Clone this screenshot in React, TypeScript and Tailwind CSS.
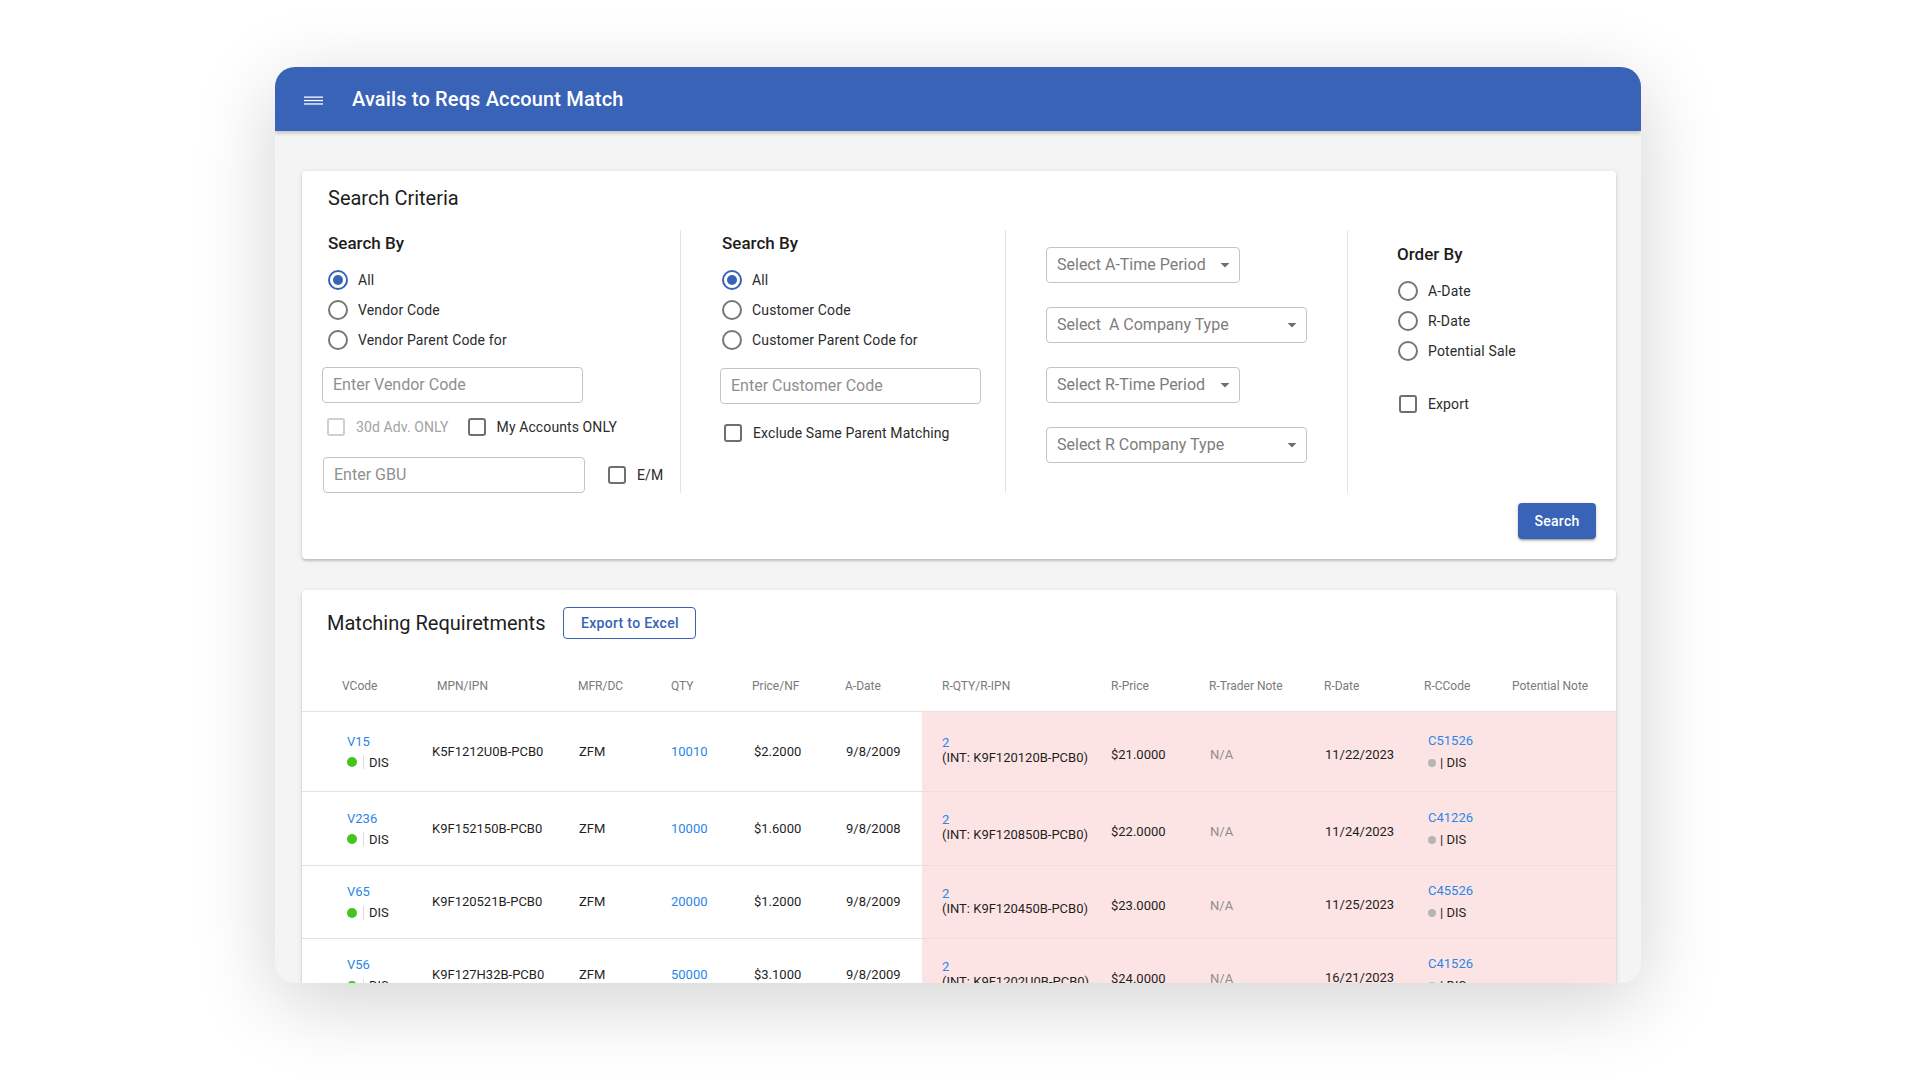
import React from "react";

function Radio({ checked, label }: { checked?: boolean; label: string }) {
  return (
    <div className="flex items-center h-[30px] gap-[10px]">
      {checked ? (
        <span className="w-[20px] h-[20px] rounded-full border-2 border-[#3963b7] flex items-center justify-center">
          <span className="w-[10px] h-[10px] rounded-full bg-[#3963b7]" />
        </span>
      ) : (
        <span className="w-[20px] h-[20px] rounded-full border-2 border-[#767676]" />
      )}
      <span className="text-[14px] tracking-[0.15px] text-[#2b2b2b] leading-[20px]">{label}</span>
    </div>
  );
}

function Check({ label, disabled }: { label: string; disabled?: boolean }) {
  return (
    <div className="flex items-center h-[20px] gap-[11px]">
      <span
        className={
          disabled
            ? "w-[18px] h-[18px] rounded-[3px] border-2 border-[#cfcfcf]"
            : "w-[18px] h-[18px] rounded-[3px] border-2 border-[#6f6f6f]"
        }
      />
      <span className={disabled ? "text-[14px] tracking-[0.1px] text-[#a3a3a3]" : "text-[14px] tracking-[0.1px] text-[#2b2b2b]"}>{label}</span>
    </div>
  );
}

function TextBox({ placeholder, w }: { placeholder: string; w: string }) {
  return (
    <div className={`${w} h-[36px] border border-[#c4c4c4] rounded-[4px] bg-white flex items-center pl-[10px]`}>
      <span className="text-[16px] text-[#8f8f8f]">{placeholder}</span>
    </div>
  );
}

function SelectBox({ label, wide }: { label: string; wide?: boolean }) {
  return (
    <div
      className={
        wide
          ? "w-[261px] h-[36px] border border-[#c4c4c4] rounded-[4px] bg-white flex items-center justify-between pl-[10px] pr-[2px]"
          : "w-[194px] h-[36px] border border-[#c4c4c4] rounded-[4px] bg-white flex items-center justify-between pl-[10px] pr-[2px]"
      }
    >
      <span className="text-[16px] text-[#7d7d7d] whitespace-pre">{label}</span>
      <svg width="24" height="24" viewBox="0 0 24 24">
        <path d="M7.5 10l4.5 4.5 4.5-4.5z" fill="#6f6f6f" />
      </svg>
    </div>
  );
}

const rows = [
  { v: "V15", mpn: "K5F1212U0B-PCB0", qty: "10010", price: "$2.2000", adate: "9/8/2009", int: "K9F120120B-PCB0", rprice: "$21.0000", rdate: "11/22/2023", cc: "C51526", h: "h-[80px]" },
  { v: "V236", mpn: "K9F152150B-PCB0", qty: "10000", price: "$1.6000", adate: "9/8/2008", int: "K9F120850B-PCB0", rprice: "$22.0000", rdate: "11/24/2023", cc: "C41226", h: "h-[74px]" },
  { v: "V65", mpn: "K9F120521B-PCB0", qty: "20000", price: "$1.2000", adate: "9/8/2009", int: "K9F120450B-PCB0", rprice: "$23.0000", rdate: "11/25/2023", cc: "C45526", h: "h-[73px]" },
  { v: "V56", mpn: "K9F127H32B-PCB0", qty: "50000", price: "$3.1000", adate: "9/8/2009", int: "K9F1202U0B-PCB0", rprice: "$24.0000", rdate: "16/21/2023", cc: "C41526", h: "h-[73px]" },
];

export default function App() {
  return (
    <div className="min-h-screen bg-white pt-[67px] pl-[275px] [font-family:Roboto,'Noto_Sans',sans-serif]">
      <div className="w-[1366px] h-[916px] rounded-[20px] overflow-hidden bg-[#f4f4f4] shadow-[0_18px_80px_rgba(0,0,0,0.18)] flex flex-col">
        {/* App bar */}
        <div className="relative z-10 h-[64px] shrink-0 bg-[#3963b7] flex items-center pl-[29px] shadow-[0_2px_4px_rgba(0,0,0,0.22)]">
          <svg width="19" height="9" viewBox="0 0 19 9" className="mt-[2px]">
            <rect x="0" y="0.5" width="19" height="1.3" fill="#ffffff" />
            <rect x="0" y="3.9" width="19" height="1.3" fill="#ffffff" />
            <rect x="0" y="7.3" width="19" height="1.3" fill="#ffffff" />
          </svg>
          <span className="ml-[29px] text-white text-[20px] tracking-[0.15px] font-medium leading-[24px]">Avails to Reqs Account Match</span>
        </div>

        {/* Content */}
        <div className="flex flex-col pl-[27px] pr-[25px] pt-[40px] gap-[31px]">
          {/* Search criteria card */}
          <div className="bg-white rounded-[4px] shadow-[0_2px_2px_rgba(0,0,0,0.14),0_1px_5px_rgba(0,0,0,0.12)] pt-[15px] pb-[20px] flex flex-col">
            <div className="pl-[26px] text-[20px] leading-[24px] text-[#1d1d1d]">Search Criteria</div>
            <div className="mt-[20px] flex h-[263px]">
              {/* Section 1 */}
              <div className="w-[379px] border-r border-[#e4e4e4] pl-[20px] flex flex-col">
                <div className="mt-[3px] ml-[6px] text-[17px] leading-[20px] font-medium text-[#1d1d1d]">Search By</div>
                <div className="mt-[12px] ml-[6px] flex flex-col">
                  <Radio checked label="All" />
                  <Radio label="Vendor Code" />
                  <Radio label="Vendor Parent Code for" />
                </div>
                <div className="mt-[12px]">
                  <TextBox placeholder="Enter Vendor Code" w="w-[261px]" />
                </div>
                <div className="mt-[14px] ml-[5px] flex items-center gap-[19px]">
                  <Check disabled label="30d Adv. ONLY" />
                  <Check label="My Accounts ONLY" />
                </div>
                <div className="mt-[20px] ml-[1px] flex items-center gap-[23px]">
                  <TextBox placeholder="Enter GBU" w="w-[262px]" />
                  <Check label="E/M" />
                </div>
              </div>
              {/* Section 2 */}
              <div className="w-[325px] border-r border-[#e4e4e4] pl-[39px] flex flex-col">
                <div className="mt-[3px] ml-[2px] text-[17px] leading-[20px] font-medium text-[#1d1d1d]">Search By</div>
                <div className="mt-[12px] ml-[2px] flex flex-col">
                  <Radio checked label="All" />
                  <Radio label="Customer Code" />
                  <Radio label="Customer Parent Code for" />
                </div>
                <div className="mt-[13px]">
                  <TextBox placeholder="Enter Customer Code" w="w-[261px]" />
                </div>
                <div className="mt-[19px] ml-[4px]">
                  <Check label="Exclude Same Parent Matching" />
                </div>
              </div>
              {/* Section 3 */}
              <div className="w-[342px] border-r border-[#e4e4e4] pl-[40px] pt-[17px] flex flex-col gap-[24px]">
                <SelectBox label="Select A-Time Period" />
                <SelectBox wide label="Select  A Company Type" />
                <SelectBox label="Select R-Time Period" />
                <SelectBox wide label="Select R Company Type" />
              </div>
              {/* Section 4 */}
              <div className="flex-1 pl-[49px] flex flex-col">
                <div className="mt-[14px] text-[17px] leading-[20px] font-medium text-[#1d1d1d]">Order By</div>
                <div className="mt-[12px] ml-[1px] flex flex-col">
                  <Radio label="A-Date" />
                  <Radio label="R-Date" />
                  <Radio label="Potential Sale" />
                </div>
                <div className="mt-[28px] ml-[2px]">
                  <Check label="Export" />
                </div>
              </div>
            </div>
            <div className="mt-[10px] flex justify-end pr-[20px]">
              <button className="w-[78px] h-[36px] rounded-[4px] bg-[#3963b7] text-white text-[14px] font-medium tracking-[0.3px] shadow-[0_3px_1px_-2px_rgba(0,0,0,0.2),0_2px_2px_rgba(0,0,0,0.14),0_1px_5px_rgba(0,0,0,0.12)]">
                Search
              </button>
            </div>
          </div>

          {/* Matching requirements card */}
          <div className="bg-white rounded-[4px] shadow-[0_2px_2px_rgba(0,0,0,0.14),0_1px_5px_rgba(0,0,0,0.12)] pt-[17px] flex flex-col h-[600px]">
            <div className="pl-[25px] flex items-center gap-[18px]">
              <span className="text-[20px] leading-[32px] text-[#1d1d1d]">Matching Requiretments</span>
              <button className="w-[133px] h-[32px] rounded-[4px] border border-[#3963b7] text-[#3963b7] text-[14px] font-medium tracking-[0.3px] bg-white">
                Export to Excel
              </button>
            </div>
            <div className="mt-[21px] flex flex-col">
              {/* header */}
              <div className="flex h-[52px] border-b border-[#e3e3e3] text-[12px] text-[#7a7a7a]">
                <div className="w-[620px] grid grid-cols-[130px_146px_93px_81px_93px_77px] items-center">
                  <div className="pl-[40px]">VCode</div>
                  <div className="pl-[5px]">MPN/IPN</div>
                  <div>MFR/DC</div>
                  <div>QTY</div>
                  <div>Price/NF</div>
                  <div>A-Date</div>
                </div>
                <div className="flex-1 grid grid-cols-[189px_98px_115px_100px_88px_1fr] items-center">
                  <div className="pl-[20px]">R-QTY/R-IPN</div>
                  <div>R-Price</div>
                  <div>R-Trader Note</div>
                  <div>R-Date</div>
                  <div>R-CCode</div>
                  <div>Potential Note</div>
                </div>
              </div>
              {rows.map((r) => (
                <div key={r.v} className={`flex ${r.h} border-b border-[#e6e0e0] text-[13px] text-[#1f1f1f]`}>
                  <div className="w-[620px] grid grid-cols-[130px_146px_93px_81px_93px_77px] items-center">
                    <div className="pl-[45px] flex flex-col">
                      <span className="leading-[21px] text-[#2a86e8]">{r.v}</span>
                      <span className="leading-[21px] flex items-center">
                        <span className="w-[10px] h-[10px] rounded-full bg-[#45c51e]" />
                        <span className="ml-[6px] h-[14px] border-l border-[#dcdcdc]" />
                        <span className="ml-[5px]">DIS</span>
                      </span>
                    </div>
                    <div>{r.mpn}</div>
                    <div className="pl-[1px]">ZFM</div>
                    <div className="text-[#2a86e8]">{r.qty}</div>
                    <div className="pl-[2px]">{r.price}</div>
                    <div className="pl-[1px]">{r.adate}</div>
                  </div>
                  <div className="flex-1 bg-[#fde4e4] grid grid-cols-[189px_98px_115px_100px_88px_1fr] items-center">
                    <div className="pl-[20px] flex flex-col pb-[3px]">
                      <span className="leading-[15px] text-[#2a86e8]">2</span>
                      <span className="leading-[15px]">(INT: {r.int})</span>
                    </div>
                    <div className="pt-[7px]">{r.rprice}</div>
                    <div className="pt-[7px] pl-[1px] text-[#8d8d8d]">N/A</div>
                    <div className="pt-[6px] pl-[1px]">{r.rdate}</div>
                    <div className="pl-[4px] flex flex-col">
                      <span className="leading-[22px] text-[#2a86e8]">{r.cc}</span>
                      <span className="leading-[22px] flex items-center">
                        <span className="w-[8px] h-[8px] rounded-full bg-[#b5b5b5]" />
                        <span className="ml-[4px]">| DIS</span>
                      </span>
                    </div>
                    <div />
                  </div>
                </div>
              ))}
            </div>
          </div>
        </div>
      </div>
    </div>
  );
}
